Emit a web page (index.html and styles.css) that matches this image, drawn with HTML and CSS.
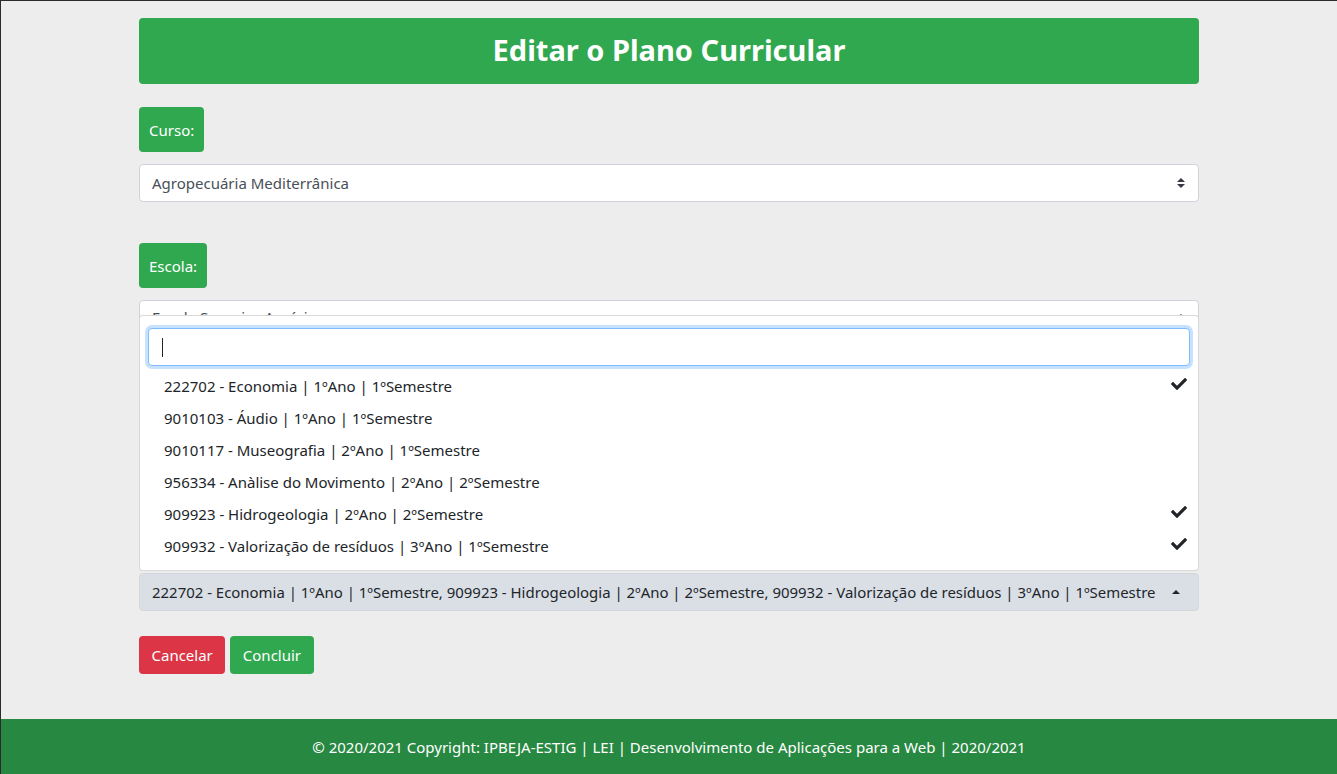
FILE: index.html
```html
<!DOCTYPE html>
<html lang="pt">
<head>
<meta charset="utf-8">
<title>Editar o Plano Curricular</title>
<link rel="stylesheet" href="styles.css">
</head>
<body>
<div class="page">
  <main class="container">
    <header class="title-bar"><h1>Editar o Plano Curricular</h1></header>

    <div class="field">
      <span class="badge">Curso:</span>
      <div class="select">
        <span class="select-text">Agropecuária Mediterrânica</span>
        <span class="updown"><i class="tri up"></i><i class="tri down"></i></span>
      </div>
    </div>

    <div class="field">
      <span class="badge">Escola:</span>
      <div class="select">
        <span class="select-text raised">Escola Superior Agrária</span>
        <span class="updown"><i class="tri up"></i><i class="tri down"></i></span>
      </div>
    </div>

    <div class="field">
      <span class="badge badge-empty"></span>
      <div class="select">
        <span class="updown"></span>
        <span class="updown"><i class="tri up"></i><i class="tri down"></i></span>
      </div>
    </div>

    <div class="field last">
      <span class="badge badge-empty"></span>
      <div class="multi">
        <div class="menu">
          <div class="searchbox"><input class="search" type="text" value="" aria-label="Pesquisar"><span class="caret-line"></span></div>
          <ul class="options">
            <li class="opt">222702 - Economia | 1ºAno | 1ºSemestre<svg class="check" viewBox="0 0 512 512"><path d="M173.9 439.4l-166.4-166.4c-10-10-10-26.2 0-36.2l36.2-36.2c10-10 26.2-10 36.2 0L192 312.7 432.1 72.6c10-10 26.2-10 36.2 0l36.2 36.2c10 10 10 26.2 0 36.2l-294.4 294.4c-10 10-26.2 10-36.2 0z"/></svg></li>
            <li class="opt">9010103 - Áudio | 1ºAno | 1ºSemestre</li>
            <li class="opt">9010117 - Museografia | 2ºAno | 1ºSemestre</li>
            <li class="opt">956334 - Anàlise do Movimento | 2ºAno | 2ºSemestre</li>
            <li class="opt">909923 - Hidrogeologia | 2ºAno | 2ºSemestre<svg class="check" viewBox="0 0 512 512"><path d="M173.9 439.4l-166.4-166.4c-10-10-10-26.2 0-36.2l36.2-36.2c10-10 26.2-10 36.2 0L192 312.7 432.1 72.6c10-10 26.2-10 36.2 0l36.2 36.2c10 10 10 26.2 0 36.2l-294.4 294.4c-10 10-26.2 10-36.2 0z"/></svg></li>
            <li class="opt">909932 - Valorização de resíduos | 3ºAno | 1ºSemestre<svg class="check" viewBox="0 0 512 512"><path d="M173.9 439.4l-166.4-166.4c-10-10-10-26.2 0-36.2l36.2-36.2c10-10 26.2-10 36.2 0L192 312.7 432.1 72.6c10-10 26.2-10 36.2 0l36.2 36.2c10 10 10 26.2 0 36.2l-294.4 294.4c-10 10-26.2 10-36.2 0z"/></svg></li>
          </ul>
        </div>
        <div class="multi-btn">
          <span class="multi-text">222702 - Economia | 1ºAno | 1ºSemestre, 909923 - Hidrogeologia | 2ºAno | 2ºSemestre, 909932 - Valorização de resíduos | 3ºAno | 1ºSemestre</span>
          <i class="tri up"></i>
        </div>
      </div>
    </div>

    <div class="actions">
      <button class="btn btn-danger" type="button">Cancelar</button>
      <button class="btn btn-success" type="button">Concluir</button>
    </div>
  </main>

  <footer class="footer">© 2020/2021 Copyright: IPBEJA-ESTIG | LEI | Desenvolvimento de Aplicações para a Web | 2020/2021</footer>
</div>
</body>
</html>
```

FILE: styles.css
```css
* { box-sizing: border-box; }

html {
  background: #2b2b2b;
}

body {
  margin: 1px 0 0 1px;
  font-family: "Noto Sans", "Open Sans", sans-serif;
  font-size: 15px;
  color: #212529;
}

.page {
  min-height: 773px;
  background: #ededed;
  display: flex;
  flex-direction: column;
}

.container {
  width: 1060px;
  margin: 0 auto;
  padding-top: 17px;
  display: flex;
  flex-direction: column;
}

.title-bar {
  background: #30a850;
  border-radius: 4px;
  height: 66px;
  display: flex;
  align-items: center;
  justify-content: center;
  margin-bottom: 23px;
}

.title-bar h1 {
  margin: 0 0 2px;
  color: #fff;
  font-size: 29px;
  font-weight: 700;
  line-height: 38px;
}

.field {
  display: flex;
  flex-direction: column;
  align-items: flex-start;
  gap: 12px;
  margin-bottom: 41px;
}

.field.last {
  gap: 13px;
  margin-bottom: 25px;
}

.badge {
  background: #30a850;
  color: #fff;
  border-radius: 4px;
  height: 45px;
  padding: 0 10px;
  display: flex;
  align-items: center;
  font-size: 15px;
}

.badge-empty {
  width: 90px;
}

.select {
  width: 100%;
  height: 38px;
  background: #fff;
  border: 1px solid #ced4da;
  border-radius: 4px;
  padding: 0 12px;
  display: flex;
  align-items: center;
  justify-content: space-between;
  color: #495057;
}

.raised {
  position: relative;
  top: -2px;
}

.updown {
  display: flex;
  flex-direction: column;
  gap: 2px;
  margin-right: 1px;
}

.tri {
  display: block;
  width: 0;
  height: 0;
  border-left: 4px solid transparent;
  border-right: 4px solid transparent;
}

.tri.up { border-bottom: 4px solid #343a40; }
.tri.down { border-top: 4px solid #343a40; }

.multi {
  position: relative;
  width: 100%;
}

.menu {
  position: absolute;
  left: 0;
  right: 0;
  bottom: calc(100% + 2px);
  background: #fff;
  border: 1px solid rgba(0, 0, 0, 0.15);
  border-radius: 4px;
  padding: 8px 0;
  z-index: 10;
}

.searchbox {
  position: relative;
  padding: 4px 8px;
}

.search {
  display: block;
  width: 100%;
  height: 38px;
  border: 1px solid #80bdff;
  border-radius: 4px;
  box-shadow: 0 0 0 3px rgba(0, 123, 255, 0.22);
  outline: none;
  font: inherit;
  background: #fff;
}

.caret-line {
  position: absolute;
  left: 22px;
  top: 14px;
  width: 1px;
  height: 19px;
  background: #212529;
}

.options {
  list-style: none;
  margin: 0;
  padding: 0;
}

.opt {
  height: 32px;
  padding: 0 11px 0 24px;
  display: flex;
  align-items: center;
  justify-content: space-between;
  color: #212529;
}

.check {
  width: 16px;
  height: 16px;
  fill: #212529;
  margin-top: -4px;
}

.multi-btn {
  width: 100%;
  height: 38px;
  background: #dadfe6;
  border: 1px solid #d3d8df;
  border-radius: 4px;
  padding: 0 12px;
  display: flex;
  align-items: center;
  justify-content: space-between;
  color: #212529;
}

.multi-btn .tri.up {
  border-bottom-color: #212529;
  margin-right: 6px;
}

.multi-text {
  white-space: nowrap;
  font-size: 14.95px;
}

.actions {
  display: flex;
  gap: 5px;
  margin-bottom: 45px;
}

.btn {
  height: 38px;
  padding: 0 12.5px;
  border: none;
  border-radius: 4px;
  color: #fff;
  font: inherit;
  font-size: 15px;
}

.btn-danger { background: #dc3545; }
.btn-success { background: #30a850; }

.footer {
  margin-top: auto;
  background: #278841;
  color: #fff;
  height: 55px;
  display: flex;
  align-items: center;
  justify-content: center;
  font-size: 15px;
}
```
